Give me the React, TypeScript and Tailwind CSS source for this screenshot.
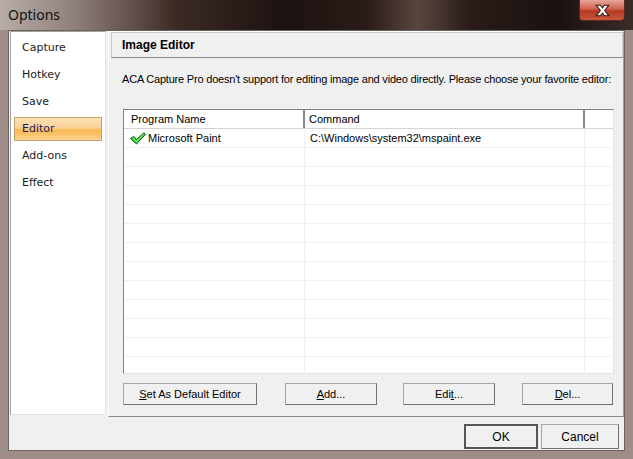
import React from 'react';

const navItems = ['Capture', 'Hotkey', 'Save', 'Editor', 'Add-ons', 'Effect'];

function CheckIcon() {
  return (
    <svg width="16" height="13" viewBox="0 0 16 13" className="shrink-0">
      <path d="M0.5 6.5 L4 4.5 L6.5 7.5 L14 0.8 L15.5 2.2 L6.5 12 Z" fill="#2ee02e" stroke="#1d4a1d" strokeWidth="1" strokeLinejoin="round" />
      <path d="M2.5 6 L6.5 9.8 L13.8 2" fill="none" stroke="#8ff58f" strokeWidth="0.8" />
    </svg>
  );
}

function WinButton({ label, u, className = '' }: { label: string; u: number; className?: string }) {
  return (
    <button
      className={`h-[22px] border border-[#a6a6a6] border-b-[#707070] border-r-[#707070] bg-[#f0f0f0] text-[11px] text-black ${className}`}
    >
      {label.slice(0, u)}
      <span className="underline">{label[u]}</span>
      {label.slice(u + 1)}
    </button>
  );
}

export default function App() {
  const rows = Array.from({ length: 13 });

  return (
    <div
      className="w-[633px] h-[459px] overflow-hidden bg-[#9d8c88] relative"
      style={{ fontFamily: '"Liberation Sans", Arial, sans-serif' }}
    >
      {/* Title bar */}
      <div className="h-[30px] flex items-center pl-[8px] bg-[linear-gradient(90deg,#b7aca8_0%,#8f7f7a_12%,#3b2a24_28%,#1c1210_45%,#2a1c18_58%,#5a4640_66%,#2a1c18_74%,#1a1210_88%,#3a2c28_100%)]">
        <span className="text-[14px] text-[#101010] mt-[-2px]" style={{ fontFamily: '"Noto Sans", sans-serif' }}>
          Options
        </span>
      </div>
      <div className="absolute left-[579px] top-0 w-[46px] h-[21px] rounded-b-[4px] border border-t-0 border-[#5a2a22] bg-[linear-gradient(180deg,#e8a79a_0%,#d0604c_45%,#b53820_55%,#c9573f_100%)] flex items-center justify-center">
        <svg width="17" height="13" viewBox="0 0 16 12">
          <path d="M2 1 L6 1 L8 3.5 L10 1 L14 1 L10 6 L14 11 L10 11 L8 8.5 L6 11 L2 11 L6 6 Z" fill="#ffffff" stroke="#3a1a14" strokeWidth="1" />
        </svg>
      </div>

      {/* Client area */}
      <div className="mx-[8px] h-[421px] bg-[#f0f0f0] border border-[#6e625f] flex flex-col">
        <div className="flex pl-[1px] gap-[2px]">
          {/* Navigation */}
          <div className="w-[96px] h-[384px] bg-white border border-[#a0a0a0] border-r-[#e3e3e3] border-b-[#e3e3e3] pt-[4px] pl-[3px] pr-[3px] flex flex-col gap-[3px]" style={{ fontFamily: '"DejaVu Sans", sans-serif' }}>
            {navItems.map((item) =>
              item === 'Editor' ? (
                <div
                  key={item}
                  className="h-[24px] flex items-center pl-[7px] border border-[#c2a36b] bg-[linear-gradient(180deg,#fde0b4_0%,#fbd297_45%,#f8b94f_55%,#fcd38f_100%)] text-[11px] text-[#1e1a5e]"
                >
                  {item}
                </div>
              ) : (
                <div key={item} className="h-[24px] flex items-center pl-[8px] text-[11px] text-[#1a1a1a]">
                  {item}
                </div>
              )
            )}
          </div>

          {/* Main panel */}
          <div className="w-[516px] h-[386px] border border-[#ffffff] border-r-[#a0a0a0] border-b-[#8a8a8a] flex flex-col">
            <div className="ml-[2px] h-[26px] border border-[#c8c8c8] border-b-[#8a8a8a] border-r-[#d0d0d0] bg-[#f0f0f0] flex items-center pl-[10px]">
              <span className="text-[12px] font-bold text-black">Image Editor</span>
            </div>
            <div className="pl-[13px] pt-[14px] text-[11px] leading-[14px] text-black whitespace-nowrap tracking-[-0.2px]">
              ACA Capture Pro doesn't support for editing image and video directly. Please choose your favorite editor:
            </div>

            {/* List view */}
            <div className="ml-[14px] mt-[23px] w-[491px] h-[265px] bg-white border border-[#828282] border-r-[#e3e3e3] border-b-[#e3e3e3] overflow-hidden">
              <div className="flex h-[19px] text-[11px] text-black border-b border-[#d5d5d5]">
                <div className="w-[181px] pl-[7px] flex items-center border-r-2 border-[#8a8a8a]">Program Name</div>
                <div className="w-[280px] pl-[4px] flex items-center border-r-2 border-[#8a8a8a]">Command</div>
                <div className="flex-1" />
              </div>
              {rows.map((_, i) => (
                <div key={i} className="flex h-[19px] text-[11px] text-black border-b border-[#f0f0f0]">
                  <div className="w-[181px] pl-[6px] flex items-center gap-[2px] border-r border-[#f0f0f0]">
                    {i === 0 && (
                      <>
                        <CheckIcon />
                        <span>Microsoft Paint</span>
                      </>
                    )}
                  </div>
                  <div className="w-[280px] pl-[5px] flex items-center border-r border-[#f0f0f0]">
                    {i === 0 && 'C:\\Windows\\system32\\mspaint.exe'}
                  </div>
                  <div className="flex-1" />
                </div>
              ))}
            </div>

            {/* Editor buttons */}
            <div className="ml-[14px] mt-[9px] flex">
              <WinButton label="Set As Default Editor" u={0} className="w-[134px]" />
              <WinButton label="Add..." u={0} className="w-[92px] ml-[28px]" />
              <WinButton label="Edit..." u={3} className="w-[92px] ml-[26px]" />
              <WinButton label="Del..." u={0} className="w-[91px] ml-[27px]" />
            </div>
          </div>
        </div>

        {/* Footer */}
        <div className="flex justify-end gap-[3px] pr-[5px] mt-[7px]">
          <button className="w-[74px] h-[25px] border-2 border-[#555555] bg-[#f0f0f0] text-[12px] text-black">OK</button>
          <button className="w-[78px] h-[25px] border border-[#a6a6a6] border-b-[#707070] border-r-[#707070] bg-[#f0f0f0] text-[12px] text-black">Cancel</button>
        </div>
      </div>
    </div>
  );
}
